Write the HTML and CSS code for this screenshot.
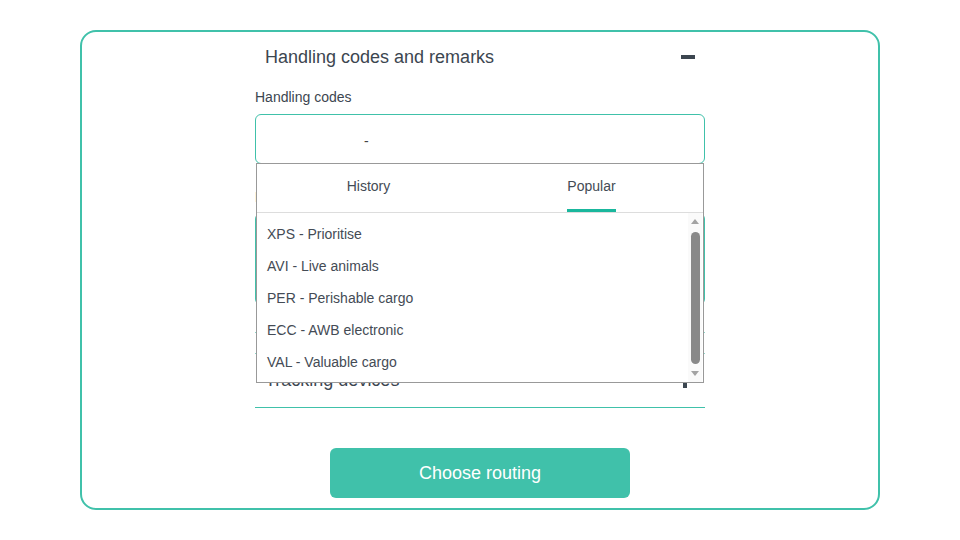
FILE: index.html
```html
<!DOCTYPE html>
<html>
<head>
<meta charset="utf-8">
<link rel="stylesheet" href="styles.css">
</head>
<body>
<div class="card">
  <div class="column">
    <div class="section-head">
      <span class="section-title">Handling codes and remarks</span>
      <span class="minus"></span>
    </div>
    <div class="label">Handling codes</div>
    <div class="field-wrap">
      <div class="input"><span class="dash">-</span></div>
      <div class="dropdown">
        <div class="tabs">
          <div class="tab">History</div>
          <div class="tab active">Popular</div>
        </div>
        <div class="list">
          <div class="item">XPS - Prioritise</div>
          <div class="item">AVI - Live animals</div>
          <div class="item">PER - Perishable cargo</div>
          <div class="item">ECC - AWB electronic</div>
          <div class="item">VAL - Valuable cargo</div>
          <div class="scrollbar">
            <span class="arrow up"></span>
            <span class="thumb"></span>
            <span class="arrow down"></span>
          </div>
        </div>
      </div>
    </div>
    <div class="label label-remarks">Remarks</div>
    <div class="textarea"></div>
    <div class="divider"></div>
    <div class="section-head tracking">
      <span class="section-title">Tracking devices</span>
      <span class="plus"></span>
    </div>
    <div class="actions">
      <button class="btn">Choose routing</button>
    </div>
  </div>
</div>
</body>
</html>
```

FILE: styles.css
```css
* { box-sizing: border-box; }
html, body { margin: 0; padding: 0; background: #fff; }
body { font-family: "Liberation Sans", Arial, sans-serif; color: #3c4650; }

.card {
  width: 800px;
  height: 480px;
  margin: 30px auto 0;
  border: 2px solid #40c1aa;
  border-radius: 16px;
}
.column {
  width: 450px;
  margin: 0 auto;
}
.section-head {
  height: 50px;
  display: flex;
  align-items: center;
  justify-content: space-between;
  padding: 0 10px;
}
.section-title {
  font-size: 18px;
  color: #3c4650;
}
.minus {
  width: 14px;
  height: 4px;
  background: #3c4650;
}
.label {
  font-size: 14px;
  line-height: 16px;
  margin-top: 7px;
  margin-bottom: 9px;
  color: #3c4650;
}
.field-wrap { position: relative; }
.input {
  height: 50px;
  border: 1px solid #40c1aa;
  border-radius: 6px;
  padding-left: 108px;
  display: flex;
  align-items: center;
  font-size: 14px;
  color: #444;
}
.dash { position: relative; top: 2px; }
.dropdown {
  position: absolute;
  left: 1px;
  right: 1px;
  top: 49px;
  height: 220px;
  background: #fff;
  border: 1px solid #999;
  z-index: 5;
}
.tabs {
  display: flex;
  height: 49px;
  border-bottom: 1px solid #ddd;
}
.tab {
  flex: 1;
  display: flex;
  align-items: center;
  justify-content: center;
  font-size: 14px;
  color: #444b55;
  position: relative;
  padding-bottom: 4px;
}
.tab.active::after {
  content: "";
  position: absolute;
  bottom: 0;
  left: 50%;
  width: 49px;
  margin-left: -25px;
  height: 3px;
  background: #1ab79d;
}
.list {
  position: relative;
  padding-top: 5px;
}
.item {
  height: 32px;
  line-height: 32px;
  padding-left: 10px;
  font-size: 14px;
  color: #444b55;
}
.scrollbar {
  position: absolute;
  right: 1px;
  top: 0;
  height: 169px;
  width: 14px;
  display: flex;
  flex-direction: column;
  align-items: center;
  background: #fafafa;
}
.arrow {
  width: 0;
  height: 0;
  border-left: 4px solid transparent;
  border-right: 4px solid transparent;
}
.arrow.up {
  border-bottom: 5px solid #a3a3a3;
  margin-top: 6px;
}
.arrow.down {
  border-top: 5px solid #a3a3a3;
  margin-top: 7px;
}
.thumb {
  width: 9px;
  height: 132px;
  margin-top: 8px;
  border-radius: 5px;
  background: #898989;
}
.label-remarks { margin-top: 25px; margin-bottom: 8px; }
.textarea {
  height: 92px;
  border: 1px solid #40c1aa;
  border-radius: 6px;
}
.divider {
  height: 1px;
  margin-top: 27px;
  background: #8fd6c9;
}
.tracking {
  margin-top: 20px;
  height: 55px;
  border-top: 1px solid #8fd6c9;
  border-bottom: 1px solid #40c1aa;
}
.plus {
  position: relative;
  width: 14px;
  height: 14px;
  margin-right: 3px;
}
.plus::before, .plus::after {
  content: "";
  position: absolute;
  background: #3c4650;
}
.plus::before { left: 5px; top: 0; width: 4px; height: 14px; }
.plus::after { left: 0; top: 5px; width: 14px; height: 4px; }
.actions {
  display: flex;
  justify-content: center;
  margin-top: 40px;
}
.btn {
  width: 300px;
  height: 50px;
  border: none;
  border-radius: 6px;
  background: #40c1aa;
  color: #fff;
  font-family: "Liberation Sans", Arial, sans-serif;
  font-size: 18px;
  padding: 0;
}
```
